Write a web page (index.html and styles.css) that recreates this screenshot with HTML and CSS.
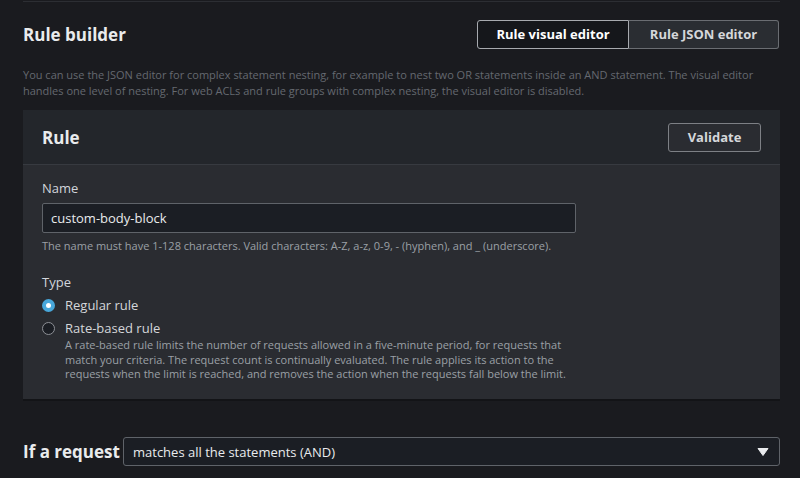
FILE: index.html
```html
<!DOCTYPE html>
<html>
<head>
<meta charset="utf-8">
<link rel="stylesheet" href="styles.css">
</head>
<body>
<div class="page">
  <div class="prev-edge"></div>
  <div class="builder-head">
    <h2 class="title">Rule builder</h2>
    <div class="seg">
      <button class="seg-btn active">Rule visual editor</button>
      <button class="seg-btn">Rule JSON editor</button>
    </div>
  </div>
  <p class="desc">You can use the JSON editor for complex statement nesting, for example to nest two OR statements inside an AND statement. The visual editor handles one level of nesting. For web ACLs and rule groups with complex nesting, the visual editor is disabled.</p>
  <div class="card">
    <div class="card-head">
      <h3 class="card-title">Rule</h3>
      <button class="btn">Validate</button>
    </div>
    <div class="card-body">
      <div class="field">
        <label class="label">Name</label>
        <div class="input">custom-body-block</div>
        <div class="hint">The name must have 1-128 characters. Valid characters: A-Z, a-z, 0-9, - (hyphen), and _ (underscore).</div>
      </div>
      <div class="field type-field">
        <label class="label">Type</label>
        <div class="radio-row">
          <span class="radio checked"></span>
          <span class="radio-label">Regular rule</span>
        </div>
        <div class="radio-row">
          <span class="radio"></span>
          <div class="radio-text">
            <span class="radio-label">Rate-based rule</span>
            <div class="radio-desc">A rate-based rule limits the number of requests allowed in a five-minute period, for requests that match your criteria. The request count is continually evaluated. The rule applies its action to the requests when the limit is reached, and removes the action when the requests fall below the limit.</div>
          </div>
        </div>
      </div>
    </div>
  </div>
  <div class="if-row">
    <span class="if-label">If a request</span>
    <div class="select">
      <span>matches all the statements (AND)</span>
      <svg class="caret" width="12" height="10" viewBox="0 0 12 10"><path d="M1 1.5 H11 L6 8.5 Z" fill="#e9ebed" stroke="#e9ebed" stroke-width="1" stroke-linejoin="round"/></svg>
    </div>
  </div>
</div>
</body>
</html>
```

FILE: styles.css
```css
* { box-sizing: border-box; }
html, body { margin: 0; padding: 0; }
body {
  background: #1a1b1f;
  font-family: "Open Sans", "Noto Sans", sans-serif;
  color: #d1d5db;
  width: 800px;
  height: 478px;
  overflow: hidden;
}
.page {
  width: 757px;
  margin-left: 23px;
}
.prev-edge {
  height: 2px;
  border-bottom: 1px solid #2c2e33;
}
.builder-head {
  display: flex;
  justify-content: space-between;
  align-items: center;
  margin-top: 17px;
  height: 30px;
}
.title {
  margin: 0;
  font-size: 17px;
  font-weight: 700;
  color: #e9ebed;
}
.seg {
  display: flex;
  margin-right: 1px;
}
.seg-btn {
  font-family: inherit;
  font-size: 13px;
  font-weight: 700;
  white-space: nowrap;
  height: 29px;
  padding: 0;
  border: 1px solid #6a6d72;
  background: #2a2d32;
  color: #d5d7da;
  border-radius: 0 3px 3px 0;
}
.seg-btn.active {
  background: #15171b;
  color: #ffffff;
  border-color: #a7aaaf;
  border-radius: 3px 0 0 3px;
  width: 152px;
}
.seg-btn:not(.active) { width: 150px; border-left: none; }
.desc {
  margin: 18px 0 0;
  font-size: 11px;
  line-height: 16px;
  color: #656970;
}
.card {
  margin-top: 11px;
  background: #2a2c31;
  border-bottom: 2px solid #131417;
  height: 291px;
}
.card-head {
  display: flex;
  justify-content: space-between;
  align-items: center;
  height: 55px;
  padding: 0 19px;
  background: #23262b;
  border-bottom: 1px solid #373a40;
}
.card-title {
  margin: 0;
  font-size: 17px;
  font-weight: 700;
  color: #e9ebed;
}
.btn {
  font-family: inherit;
  font-size: 13px;
  font-weight: 700;
  color: #d5d7da;
  background: #2a2c31;
  border: 1px solid #7d8085;
  border-radius: 3px;
  height: 29px;
  width: 93px;
}
.card-body {
  padding: 13px 19px 0;
}
.label {
  display: block;
  font-size: 13px;
  line-height: 20px;
  color: #d1d5db;
}
.input {
  margin-top: 5px;
  width: 534px;
  height: 30px;
  background: #1b1e24;
  border: 1px solid #5f6369;
  border-radius: 2px;
  font-size: 13px;
  line-height: 28px;
  padding-left: 8px;
  color: #e9ebed;
}
.hint {
  margin-top: 5px;
  font-size: 11px;
  line-height: 16px;
  color: #9ba0a6;
}
.type-field { margin-top: 18px; }
.radio-row {
  display: flex;
  align-items: flex-start;
  margin-top: 3px;
}
.radio {
  width: 13px;
  height: 13px;
  border-radius: 50%;
  border: 1px solid #8d9096;
  background: #1b1e24;
  margin: 4px 10px 0 0;
  flex: none;
}
.radio.checked {
  border: 4px solid #48a7da;
  background: #ffffff;
}
.radio-label {
  display: block;
  font-size: 13px;
  line-height: 20px;
  color: #d5d7da;
}
.radio-desc {
  font-size: 11px;
  line-height: 14.5px;
  color: #9ba0a6;
  width: 530px;
}
.if-row {
  display: flex;
  align-items: center;
  margin-top: 36px;
}
.if-label {
  font-size: 17px;
  font-weight: 700;
  color: #e9ebed;
  width: 100px;
}
.select {
  flex: 1;
  display: flex;
  justify-content: space-between;
  align-items: center;
  height: 29px;
  background: #1b1e24;
  border: 1px solid #5f6369;
  border-radius: 3px;
  padding: 0 10px 0 9px;
  font-size: 13px;
  color: #e9ebed;
}
.caret { display: block; }
```
